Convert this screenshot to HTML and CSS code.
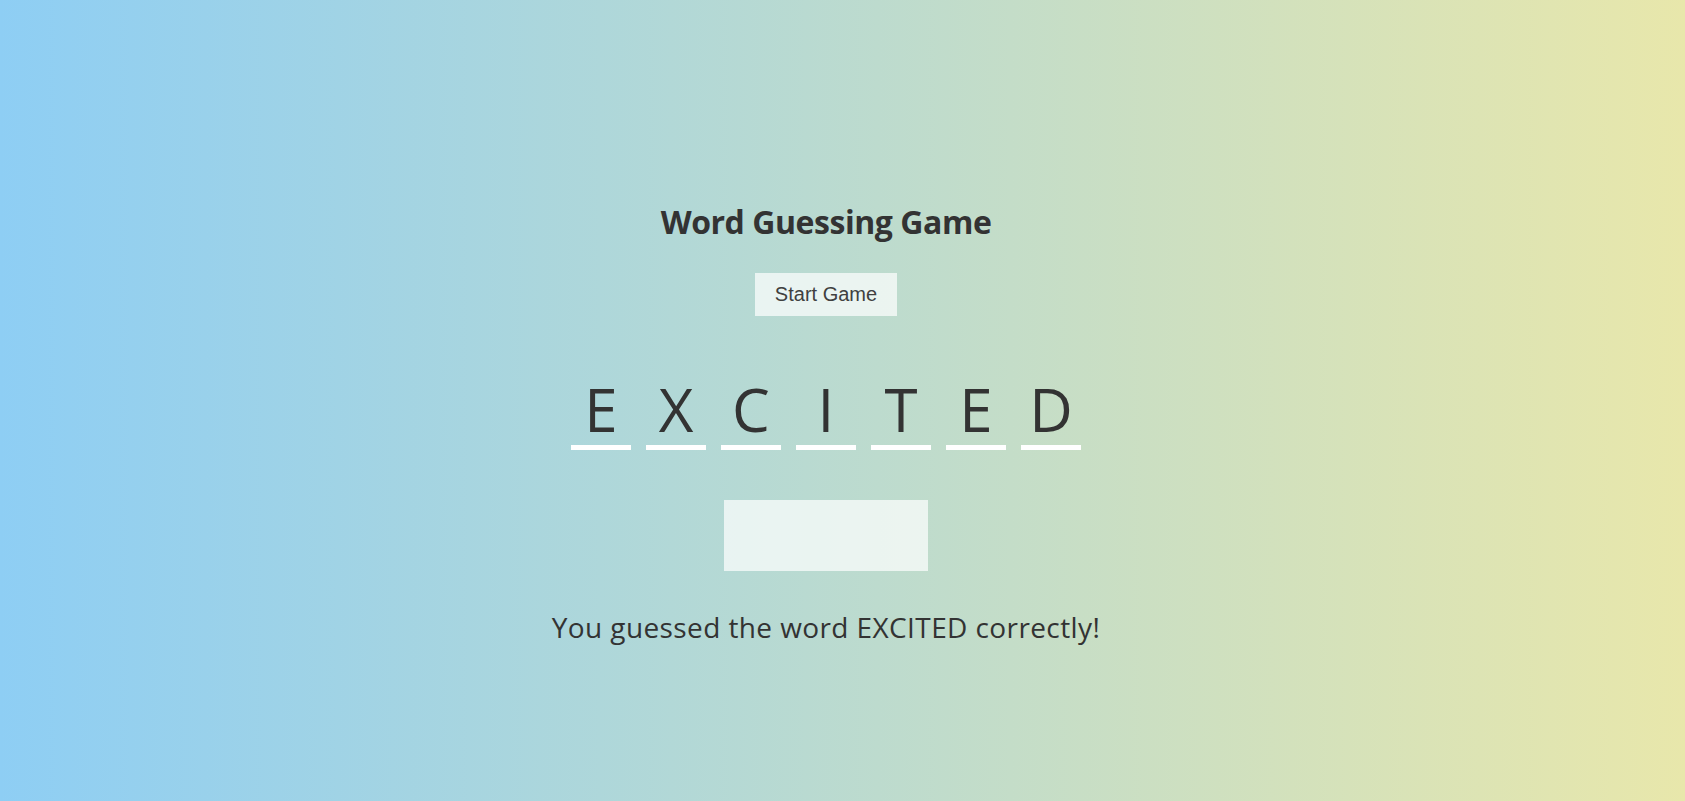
FILE: index.html
```html
<!DOCTYPE html>
<html lang="en">
<head>
<meta charset="utf-8">
<title>Word Guessing Game</title>
<link rel="stylesheet" href="styles.css">
</head>
<body>
<main class="game">
  <h1 class="title">Word Guessing Game</h1>
  <button class="start-btn" type="button">Start Game</button>
  <div class="word">
    <span class="letter">E</span>
    <span class="letter">X</span>
    <span class="letter">C</span>
    <span class="letter">I</span>
    <span class="letter">T</span>
    <span class="letter">E</span>
    <span class="letter">D</span>
  </div>
  <input class="guess" type="text" aria-label="Guess">
  <p class="message">You guessed the word EXCITED correctly!</p>
</main>
</body>
</html>
```

FILE: styles.css
```css
html, body {
  margin: 0;
  padding: 0;
}

body {
  min-height: 100vh;
  background: linear-gradient(to right, #8ecef4, #e8e7ab);
  font-family: "Open Sans", "DejaVu Sans", sans-serif;
  color: #333333;
}

.game {
  display: flex;
  flex-direction: column;
  align-items: center;
  padding: 202px 33px 0 0;
}

.title {
  margin: 0;
  font-size: 32px;
  line-height: 40px;
  font-weight: 700;
  letter-spacing: -0.45px;
}

.start-btn {
  margin-top: 31px;
  padding: 10px 20px;
  border: none;
  background: rgba(255, 255, 255, 0.7);
  font-family: "Liberation Sans", Arial, sans-serif;
  font-size: 20px;
  line-height: 23px;
  color: #404040;
}

.word {
  display: flex;
  gap: 15px;
  margin-top: 57px;
}

.letter {
  width: 60px;
  text-align: center;
  font-size: 60px;
  line-height: 72px;
  border-bottom: 5px solid #ffffff;
}

.guess {
  box-sizing: border-box;
  margin-top: 50px;
  width: 204px;
  height: 71px;
  border: none;
  background: rgba(255, 255, 255, 0.7);
}

.message {
  margin: 39px 0 0;
  font-size: 28px;
  line-height: 34px;
  letter-spacing: 0.4px;
}
```
